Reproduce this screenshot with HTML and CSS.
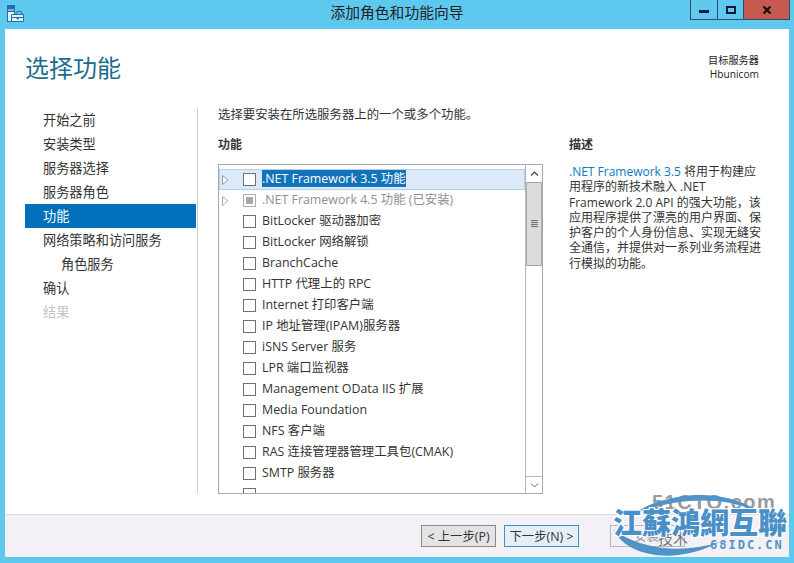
FILE: index.html
```html
<!DOCTYPE html>
<html lang="zh-CN">
<head>
<meta charset="utf-8">
<title>添加角色和功能向导</title>
<link rel="stylesheet" href="styles.css">
</head>
<body>
<div class="window">
  <header class="titlebar">
    <svg class="app-icon" width="17" height="17" viewBox="0 0 17 17">
      <rect x="0.5" y="0.5" width="7" height="16" fill="#e8f4fb" stroke="#1f6fa8"/>
      <rect x="1" y="1" width="6" height="3.5" fill="#1f6fa8"/>
      <rect x="1" y="5.5" width="6" height="1.5" fill="#1f6fa8"/>
      <path d="M4.5 9.5h12v7h-12z" fill="#e8f4fb" stroke="#1f6fa8"/>
      <path d="M8.5 9.5l1.5-3h4l1.500 3M4.500 12.500h12M10 12v2h1.500v-2" fill="none" stroke="#1f6fa8"/>
    </svg>
    <div class="title">添加角色和功能向导</div>
    <div class="controls">
      <div class="ctl"><span class="ico-min"></span></div>
      <div class="ctl ctl-max"><span class="ico-max"></span></div>
      <div class="ctl ctl-close">
        <svg width="10" height="8" viewBox="0 0 10 8"><path d="M1.500 0.500l7 7M8.500 0.500l-7 7" stroke="#111" stroke-width="2.200" fill="none"/></svg>
      </div>
    </div>
  </header>

  <div class="client">
    <div class="page">
      <div class="page-head">
        <h1 class="heading">选择功能</h1>
        <div class="target"><div>目标服务器</div><div>Hbunicom</div></div>
      </div>
      <div class="page-body">
        <nav class="steps">
          <div class="step">开始之前</div>
          <div class="step">安装类型</div>
          <div class="step">服务器选择</div>
          <div class="step">服务器角色</div>
          <div class="step step-on">功能</div>
          <div class="step">网络策略和访问服务</div>
          <div class="step step-sub">角色服务</div>
          <div class="step">确认</div>
          <div class="step step-off">结果</div>
        </nav>
        <main class="main">
          <p class="intro">选择要安装在所选服务器上的一个或多个功能。</p>
          <div class="columns">
            <section class="features">
              <h2 class="label">功能</h2>
              <div class="listbox">
                <div class="rows">
                  <div class="row row-on"><svg class="arrow" width="7" height="10" viewBox="0 0 7 10"><path d="M0.500 0.500l5.500 4.500-5.500 4.500z" fill="#fff" stroke="#8a9aa6"/></svg><span class="check"></span><span class="name name-on">.NET Framework 3.5 功能</span></div>
                  <div class="row row-off"><svg class="arrow" width="7" height="10" viewBox="0 0 7 10"><path d="M0.500 0.500l5.500 4.500-5.500 4.500z" fill="#fff" stroke="#a4aeb6"/></svg><span class="check check-off"></span><span class="name">.NET Framework 4.5 功能 (已安装)</span></div>
                  <div class="row"><span class="check"></span><span class="name">BitLocker 驱动器加密</span></div>
                  <div class="row"><span class="check"></span><span class="name">BitLocker 网络解锁</span></div>
                  <div class="row"><span class="check"></span><span class="name">BranchCache</span></div>
                  <div class="row"><span class="check"></span><span class="name">HTTP 代理上的 RPC</span></div>
                  <div class="row"><span class="check"></span><span class="name">Internet 打印客户端</span></div>
                  <div class="row"><span class="check"></span><span class="name">IP 地址管理(IPAM)服务器</span></div>
                  <div class="row"><span class="check"></span><span class="name">iSNS Server 服务</span></div>
                  <div class="row"><span class="check"></span><span class="name">LPR 端口监视器</span></div>
                  <div class="row"><span class="check"></span><span class="name">Management OData IIS 扩展</span></div>
                  <div class="row"><span class="check"></span><span class="name">Media Foundation</span></div>
                  <div class="row"><span class="check"></span><span class="name">NFS 客户端</span></div>
                  <div class="row"><span class="check"></span><span class="name">RAS 连接管理器管理工具包(CMAK)</span></div>
                  <div class="row"><span class="check"></span><span class="name">SMTP 服务器</span></div>
                  <div class="row"><span class="check"></span></div>
                </div>
                <div class="scrollbar">
                  <div class="sb-btn"><svg width="9" height="6" viewBox="0 0 9 6"><path d="M1 4.500l3.500-3.500 3.500 3.500" fill="none" stroke="#444" stroke-width="1.200"/></svg></div>
                  <div class="sb-thumb"><span class="grip"></span></div>
                  <div class="sb-track"></div>
                  <div class="sb-btn sb-btn-end"><svg width="9" height="6" viewBox="0 0 9 6"><path d="M1 1.500l3.500 3.500 3.500-3.500" fill="none" stroke="#666" stroke-width="1"/></svg></div>
                </div>
              </div>
            </section>
            <aside class="desc">
              <h2 class="label">描述</h2>
              <p class="desc-text"><span class="link">.NET Framework 3.5</span> 将用于构建应<br>用程序的新技术融入 .NET<br>Framework 2.0 API 的强大功能，该<br>应用程序提供了漂亮的用户界面、保<br>护客户的个人身份信息、实现无缝安<br>全通信，并提供对一系列业务流程进<br>行模拟的功能。</p>
            </aside>
          </div>
        </main>
      </div>
      <footer class="footer">
        <button class="btn">&lt; 上一步(P)</button>
        <button class="btn btn-next">下一步(N) &gt;</button>
        <button class="btn btn-ghost">安装</button>
      </footer>
    </div>
  </div>

  <div class="watermark">
    <div class="wm-top">51CTO.com</div>
    <svg class="wm-swoosh" width="182" height="73" viewBox="0 0 182 73">
      <path d="M2 42C14 68 62 78 108 54 70 66 30 62 2 42z" fill="#4f93c8"/>
      <path d="M21 26C50 6 110-4 150 26 115 8 70 8 21 26z" fill="#4f93c8"/>
    </svg>
    <div class="wm-low">技术</div>
    <div class="wm-main">江蘇鴻網互聯</div>
    <div class="wm-bottom">68IDC.CN</div>
  </div>
</div>
</body>
</html>
```
FILE: styles.css
```css
* { box-sizing: border-box; }
html, body { margin: 0; padding: 0; }
body {
  width: 794px;
  height: 563px;
  overflow: hidden;
  font-family: "Open Sans", "Noto Sans CJK SC", sans-serif;
  font-size: 12px;
  color: #333;
}
.window {
  position: relative;
  width: 794px;
  height: 563px;
  background: #5fc8ef;
  display: flex;
  flex-direction: column;
  overflow: hidden;
}
.titlebar {
  position: relative;
  height: 29px;
  flex: none;
  display: flex;
  align-items: flex-start;
}
.app-icon { margin: 5px 0 0 7px; }
.title {
  position: absolute;
  left: 0;
  right: 0;
  top: 3px;
  text-align: center;
  font-size: 14.800px;
  line-height: 19px;
  color: #222;
}
.controls {
  position: absolute;
  right: 4px;
  top: 0;
  height: 20px;
  display: flex;
  border: 1px solid #2f4f68;
  border-top: 0;
}
.ctl {
  width: 27px;
  display: flex;
  align-items: center;
  justify-content: center;
  border-right: 1px solid #2f4f68;
}
.ctl-max { width: 26px; }
.ctl-close { width: 45px; background: #c75a50; border-right: 0; }
.ico-min { display: block; width: 10px; height: 3px; background: #0c1c33; margin-top: 4px; }
.ico-max { display: block; width: 10px; height: 8px; border: 2px solid #0c1c33; }

.client {
  flex: 1;
  margin: 0 5px 6px 5px;
  min-height: 0;
  background: #fff;
}
.page { height: 100%; display: flex; flex-direction: column; }
.page-head {
  height: 79px;
  flex: none;
  display: flex;
  justify-content: space-between;
  padding: 0 30px 0 20px;
}
.heading {
  margin: 22px 0 0;
  font-size: 24px;
  line-height: 34px;
  font-weight: 400;
  color: #1b6d8c;
}
.target {
  margin-top: 24px;
  font-size: 10.200px;
  line-height: 14px;
  text-align: right;
  color: #222;
}
.page-body { flex: 1; min-height: 0; display: flex; padding-left: 20px; }
.steps { width: 171px; flex: none; margin-right: 1px; }
.step {
  height: 24px;
  line-height: 25px;
  padding-left: 18px;
  font-size: 13.200px;
  color: #333;
}
.step-on { background: #0070ba; color: #fff; }
.step-sub { padding-left: 36px; }
.step-off { color: #c4c4c4; }
.main {
  width: 592px;
  height: 385px;
  border-left: 1px solid #c9ccd0;
  padding-left: 20px;
}
.intro { margin: 0; font-size: 12.400px; line-height: 14px; color: #333; }
.columns { display: flex; margin-top: 15px; }
.features { width: 325px; flex: none; }
.label { margin: 0; font-size: 12px; line-height: 16px; font-weight: 700; color: #333; }
.listbox {
  margin-top: 11px;
  height: 330px;
  border: 1px solid #a8a8a8;
  display: flex;
}
.rows { flex: 1; min-width: 0; padding-top: 4px; overflow: hidden; }
.row {
  position: relative;
  height: 21px;
  display: flex;
  align-items: center;
  padding-left: 24px;
  font-size: 12.400px;
  color: #333;
}
.row-on { background: #dce9f8; box-shadow: inset 0 0 0 1px #b6cfe8; }
.row-off { color: #8f8f8f; }
.arrow { position: absolute; left: 3px; top: 6px; }
.check {
  width: 13px;
  height: 13px;
  flex: none;
  border: 1px solid #707070;
  background: #fff;
  margin-right: 6px;
}
.check-off { border-color: #b0b0b0; background: #a8a8a8; box-shadow: inset 0 0 0 2px #fff; }
.name { white-space: nowrap; line-height: 17px; margin-bottom: 3px; }
.name-on { background: #1173b8; color: #fff; }
.scrollbar {
  width: 17px;
  flex: none;
  border-left: 1px solid #b8b8b8;
  display: flex;
  flex-direction: column;
}
.sb-btn { height: 17px; flex: none; display: flex; align-items: center; justify-content: center; }
.sb-btn-end { border-top: 1px solid #b8b8b8; }
.sb-thumb {
  height: 84px;
  flex: none;
  background: #dcdcdc;
  border: 1px solid #a8a8a8;
  display: flex;
  align-items: center;
  justify-content: center;
}
.grip {
  display: block;
  width: 7px;
  height: 8px;
  background: repeating-linear-gradient(#777 0 1px, #cfcfcf 1px 2px);
}
.sb-track { flex: 1; }
.desc { margin-left: 26px; width: 196px; }
.desc-text { margin: 11px 0 0; font-size: 12px; line-height: 15.300px; color: #333; white-space: nowrap; }
.link { color: #0a78bd; }
.footer {
  height: 43px;
  flex: none;
  margin-top: 20px;
  background: #f3f1f5;
  border-top: 1px solid #dcdcdc;
  display: flex;
  align-items: flex-start;
  padding: 10px 0 0 416px;
  gap: 8px;
}
.btn {
  width: 75px;
  height: 22px;
  padding: 1px 0 0;
  font-family: inherit;
  font-size: 12.400px;
  line-height: 18px;
  color: #333;
  background: #e3e3e3;
  border: 1px solid #8a8a8a;
}
.btn-next { border-color: #3f8fc9; background: #e6eef5; }
.btn-ghost { margin-left: 23px; background: #f3f1f5; border-color: #b5b5b5; color: #999; text-align: left; padding-left: 23px; }

.watermark {
  position: absolute;
  left: 612px;
  top: 488px;
  width: 182px;
  height: 73px;
}
.wm-swoosh { position: absolute; left: 0; top: 0; }
.wm-top {
  position: absolute;
  left: 40px;
  top: 4px;
  font: 700 20px/20px "Liberation Sans", sans-serif;
  color: #9a9a9a;
  letter-spacing: 1.500px;
}
.wm-main {
  position: absolute;
  left: 1px;
  top: 16px;
  font-family: "Noto Sans CJK TC", sans-serif;
  font-weight: 900;
  font-size: 29px;
  line-height: 34px;
  color: #4a90c8;
  white-space: nowrap;
  text-shadow: 1px 1px 0 #fff, -1px -1px 0 #fff, 1px -1px 0 #fff, -1px 1px 0 #fff;
}
.wm-low {
  position: absolute;
  left: 46px;
  top: 42px;
  font-size: 15px;
  line-height: 16px;
  color: #777;
}
.wm-bottom {
  position: absolute;
  left: 98px;
  top: 51px;
  font: 700 12px/12px "DejaVu Sans Mono", monospace;
  letter-spacing: 2px;
  color: #4f93c8;
}
```
